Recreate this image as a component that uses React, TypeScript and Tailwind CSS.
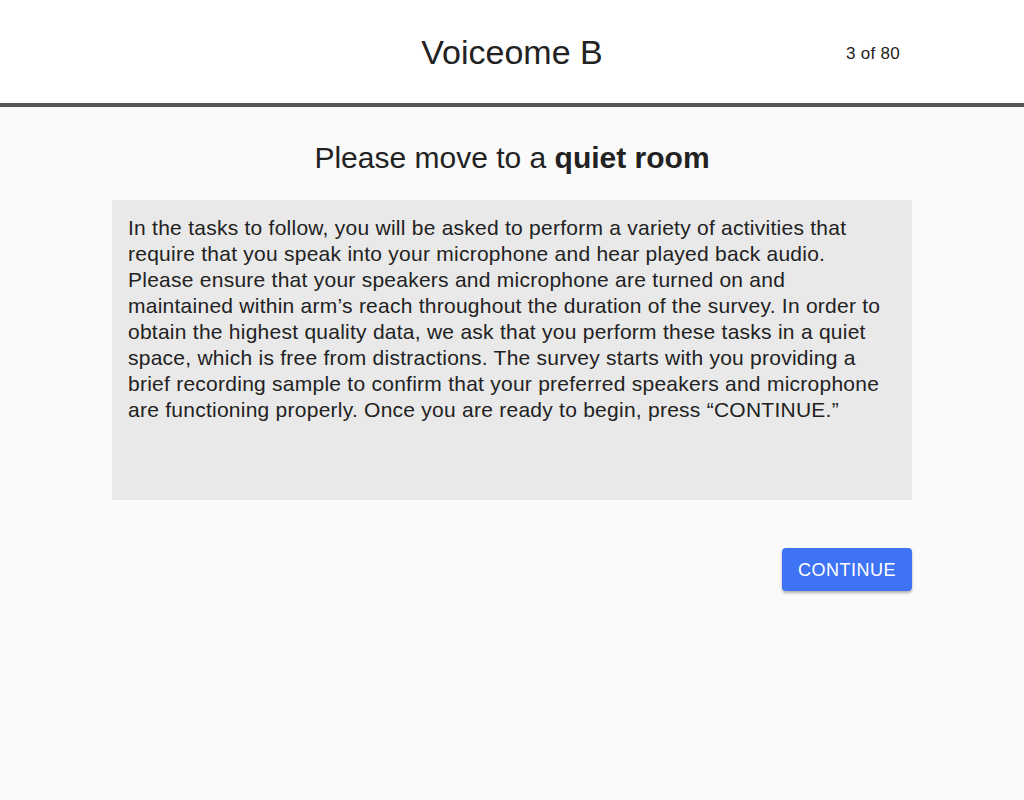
import React from 'react';

const body =
  'In the tasks to follow, you will be asked to perform a variety of activities that require that you speak into your microphone and hear played back audio. Please ensure that your speakers and microphone are turned on and maintained within arm\u2019s reach throughout the duration of the survey. In order to obtain the highest quality data, we ask that you perform these tasks in a quiet space, which is free from distractions. The survey starts with you providing a brief recording sample to confirm that your preferred speakers and microphone are functioning properly. Once you are ready to begin, press \u201cCONTINUE.\u201d';

export default function App() {
  return (
    <div className="min-h-[800px] bg-[#fafafa] font-['Liberation_Sans',Arial,sans-serif] text-[#222]">
      <header className="relative flex h-[107px] items-center justify-center border-b-4 border-[#555] bg-white">
        <h1 className="text-[34px] leading-none">Voiceome B</h1>
        <span className="absolute left-[846px] top-[41px] text-[17px] tracking-[0.3px]">3 of 80</span>
      </header>

      <main className="mx-auto flex w-[800px] flex-col pt-[35px]">
        <h2 className="text-center text-[30px] leading-[32px]">
          Please move to a <b>quiet room</b>
        </h2>
        <div className="mt-[26px] h-[300px] bg-[#e9e9e9] px-4 pt-[15px] text-[21px] leading-[26px] tracking-[0.25px]">
          {body}
        </div>
        <div className="mt-[48px] flex justify-end">
          <button className="h-[43px] w-[130px] rounded bg-[#3f73f5] pt-[2px] text-[18px] tracking-[0.5px] text-white shadow-[0_2px_3px_rgba(0,0,0,0.3)]">
            CONTINUE
          </button>
        </div>
      </main>
    </div>
  );
}
